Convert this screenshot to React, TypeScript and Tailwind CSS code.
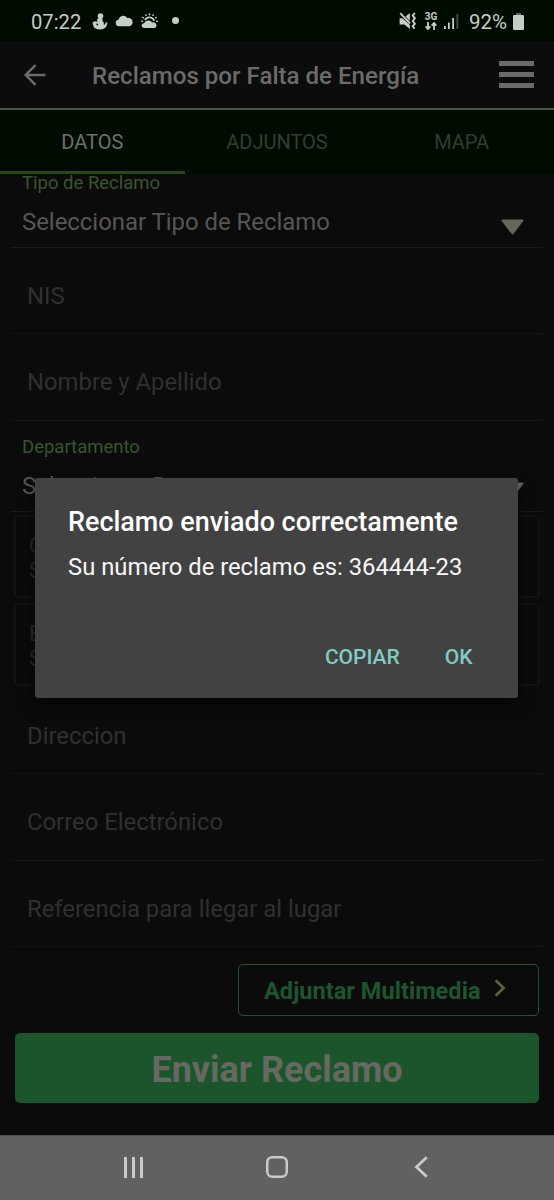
const tabs = [
  { label: "DATOS", active: true },
  { label: "ADJUNTOS", active: false },
  { label: "MAPA", active: false },
];

function StatusBar() {
  return (
    <div className="flex h-[41px] items-center bg-[#000b00] pl-[31px] pr-[30px] text-[#c6ccc6]">
      <span className="mt-[2px] w-[51px] whitespace-nowrap text-[20.200px] leading-[42px]">07:22</span>

      <svg className="ml-[10px] mt-[1px]" width="16" height="17" viewBox="0 0 16 17" fill="currentColor">
        <circle cx="8.500" cy="3" r="2.800" />
        <path d="M5 6.300 7.500 4.500l3.300 1.300-.4 2.200 1.600 1.500-.4 1.900 1.500.1.500-2.300 1.700.3c.2 3.900-2.600 7-7.300 7-3.800 0-6.200-1.500-6.800-4L.5 9.500l2.300-1.200 2.600.4z" />
        <circle cx="5.300" cy="11.400" r=".9" fill="#000b00" />
      </svg>

      <svg className="ml-[7px]" width="19" height="12" viewBox="0 0 19 12" fill="currentColor">
        <path d="M3.700 11.300A3.500 3.500 0 0 1 3.500 4.400 4.800 4.800 0 0 1 12.200 3 4.200 4.200 0 0 1 14.500 11.300z" />
      </svg>

      <svg className="ml-[7px]" width="17" height="16" viewBox="0 0 17 16" fill="currentColor">
        <path d="M3 15a2.400 2.400 0 0 1 0-4.800 4.800 4.800 0 0 1 8.300-.7A2.800 2.800 0 1 1 13.500 15z" />
        <path d="M4 7a5 5 0 0 1 9.200.8" stroke="currentColor" strokeWidth="1.800" fill="none" />
        <path
          d="M8.500 .3v2M4.500 1.300l.8 1.600M12.500 1.300l-.8 1.600M1.300 4.200l1.500 1M15.700 4.200l-1.500 1M.2 8.300h1.700M15.100 8.300h1.700"
          stroke="currentColor"
          strokeWidth="1.500"
        />
      </svg>

      <span className="ml-[14px] size-[7px] rounded-full bg-current" />

      <div className="ml-auto flex items-center">
        <svg width="18" height="18" viewBox="0 0 18 18" fill="currentColor">
          <path d="M.6 6.200h2.800L10.800 13V17L5.300 12.500H.6z" />
          <path d="M6.600 4.600 10.800 1v8z" />
          <path d="M1.200 1.200 11 11.500" stroke="currentColor" strokeWidth="1.900" />
          <path d="M15.800 1l-2 2.600 2 2.700-2 2.700 2 2.700-2 2.600 1.700 2.500" stroke="currentColor" strokeWidth="2" fill="none" />
        </svg>

        <div className="ml-[7px] flex w-[14px] flex-col items-center">
          <span className="text-[10px] font-bold leading-[9px]">3G</span>
          <svg className="mt-[1px]" width="12" height="8" viewBox="0 0 12 8" fill="none" stroke="currentColor" strokeWidth="1.800">
            <path d="M3 0v7M.6 4.400 3 7l2.400-2.600M9 8V1M6.600 3.600 9 1l2.400 2.600" />
          </svg>
        </div>

        <svg className="ml-[6px]" width="15" height="16" viewBox="0 0 15 16" fill="currentColor">
          <path d="M0 13h1.800v3H0zM4 9.500h1.800V16H4zM8.200 5H10v11H8.200z" />
          <path d="M12.500 1h1.800v15h-1.800z" opacity=".35" />
        </svg>

        <span className="ml-[10px] mt-[2px] w-[39px] whitespace-nowrap text-[20.500px] leading-[42px]">92%</span>

        <svg className="ml-[5px] mt-[1px]" width="11" height="17" viewBox="0 0 11 17" fill="currentColor">
          <path d="M3 0h5v2H3z" opacity=".45" />
          <rect y="2" width="11" height="15" rx="1.200" />
        </svg>
      </div>
    </div>
  );
}

function Header() {
  return (
    <header className="flex h-[69px] items-center border-b-2 border-[#50534f] bg-[#0c0c0c] pl-[24px] pr-[20px]">
      <svg width="22" height="22" viewBox="0 0 22 22" fill="none" stroke="#6b6b69" strokeWidth="2.400">
        <path d="M21.500 11H2M11.500 1.200 1.700 11l9.800 9.800" />
      </svg>
      <h1 className="ml-[46px] mt-[2px] whitespace-nowrap text-[24.100px] font-medium leading-[30px] text-[#6b6b69]">
        Reclamos por Falta de Energía
      </h1>
      <div className="ml-auto flex w-[35px] flex-col gap-[6px]">
        <span className="h-[5px] bg-[#6b6b67]" />
        <span className="h-[5px] bg-[#6b6b67]" />
        <span className="h-[5px] bg-[#6b6b67]" />
      </div>
    </header>
  );
}

function Tabs() {
  return (
    <nav className="grid h-[64px] grid-cols-3 bg-[#000b00]">
      {tabs.map((tab) => (
        <div
          key={tab.label}
          className={
            tab.active
              ? "h-[64px] border-b-[3px] border-[#234b17] text-center text-[20px] leading-[65px] text-[#6c716c]"
              : "h-[64px] text-center text-[20px] leading-[65px] text-[#343b34]"
          }
        >
          {tab.label}
        </div>
      ))}
    </nav>
  );
}

function Select({ label, value }: { label: string; value: string }) {
  return (
    <div className="mx-[11px] border-b border-[#191919] pl-[11px] pr-[19px]">
      <div className="pb-[2px] text-[18.500px] leading-[19px] text-[#38562d]">{label}</div>
      <div className="flex h-[52px] items-center justify-between">
        <span className="mt-[2px] text-[23.900px] leading-[30px] text-[#565655]">{value}</span>
        <svg className="mt-[11px]" width="23" height="16" viewBox="0 0 23 16">
          <path d="M1.500 1.500h20L11.500 14.500z" fill="#666661" stroke="#666661" strokeWidth="2" strokeLinejoin="round" />
        </svg>
      </div>
    </div>
  );
}

function Input({ placeholder }: { placeholder: string }) {
  return (
    <div className="mx-[11px] h-[86.400px] border-b border-[#151515] pl-[16px] text-[23.850px] leading-[97px] text-[#303030]">
      {placeholder}
    </div>
  );
}

function DisabledSelect({ label, value }: { label: string; value: string }) {
  return (
    <div className="mx-[14px] h-[83px] rounded-[5px] border-2 border-[#131313] pl-[13px] pt-[16px] text-[22px] leading-[25px] text-[#2b2b2b]">
      <div>{label}</div>
      <div>{value}</div>
    </div>
  );
}

function Dialog() {
  return (
    <div className="absolute left-[35px] top-[478px] h-[220px] w-[483px] rounded-[3px] bg-[#424242] px-[33px] pt-[28px] shadow-[0_8px_16px_rgba(0,0,0,0.600)]">
      <h2 className="whitespace-nowrap text-[26.950px] font-medium leading-[32px] text-white">
        Reclamo enviado correctamente
      </h2>
      <p className="mt-[13px] whitespace-nowrap text-[23.800px] leading-[32px] text-[#f7f7f7]">
        Su número de reclamo es: 364444-23
      </p>
      <div className="mt-[60px] flex justify-end gap-[45px] pr-[12.500px] text-[21px] font-medium leading-[28px] text-[#80cbc4]">
        <button>COPIAR</button>
        <button>OK</button>
      </div>
    </div>
  );
}

function NavigationBar() {
  return (
    <div className="grid h-[65px] grid-cols-[266px_22px_266px] border-t border-[#505050] bg-[#616161] text-[#c9c9c9]">
      <div className="flex h-[63px] items-center justify-center gap-[5px]">
        <span className="h-[21px] w-[3px] bg-current" />
        <span className="h-[21px] w-[3px] bg-current" />
        <span className="h-[21px] w-[3px] bg-current" />
      </div>
      <svg className="mt-[20px]" width="22" height="22" viewBox="0 0 22 22" fill="none" stroke="currentColor" strokeWidth="2.500">
        <rect x="1.250" y="1.250" width="19.500" height="19.500" rx="5" />
      </svg>
      <svg className="mt-[20px] justify-self-center" width="14" height="22" viewBox="0 0 14 22" fill="none" stroke="currentColor" strokeWidth="2.800">
        <path d="M12.800 1.200 2.500 11l10.300 9.800" />
      </svg>
    </div>
  );
}

export default function App() {
  return (
    <div className="relative flex h-[1200px] w-[554px] flex-col overflow-hidden bg-[#0b0b0b] font-['Roboto',sans-serif]">
      <StatusBar />
      <Header />
      <Tabs />

      <main className="flex-1">
        <Select label="Tipo de Reclamo" value="Seleccionar Tipo de Reclamo" />
        <Input placeholder="NIS" />
        <Input placeholder="Nombre y Apellido" />
        <div className="mt-[17px]">
          <Select label="Departamento" value="Seleccionar Departamento" />
        </div>
        <div className="mt-[3px] flex flex-col gap-[5px]">
          <DisabledSelect label="Corregimiento" value="Seleccionar" />
          <DisabledSelect label="Barrio" value="Seleccionar" />
        </div>
        <div className="mt-[2px]">
          <Input placeholder="Direccion" />
          <Input placeholder="Correo Electrónico" />
          <Input placeholder="Referencia para llegar al lugar" />
        </div>

        <div className="mx-[15px] mt-[17px] flex flex-col items-end gap-[17px]">
          <button className="flex h-[52px] w-[301px] items-center rounded-[5px] border border-[#1d552d] pl-[25px] text-[23.600px] font-bold leading-[30px] text-[#1d552d]">
            <span className="mt-[2px]">Adjuntar Multimedia</span>
            <svg className="ml-[13px] -mt-[3px]" width="13" height="18" viewBox="0 0 13 18" fill="none" stroke="#59643f" strokeWidth="2.600">
              <path d="M1.500 1.200 9.700 9l-8.200 7.800" />
            </svg>
          </button>
          <button className="h-[70px] w-full rounded-[5px] bg-[#1c552b] text-[36px] font-bold leading-[74px] text-[#666961]">
            Enviar Reclamo
          </button>
        </div>
      </main>

      <NavigationBar />
      <Dialog />
    </div>
  );
}
